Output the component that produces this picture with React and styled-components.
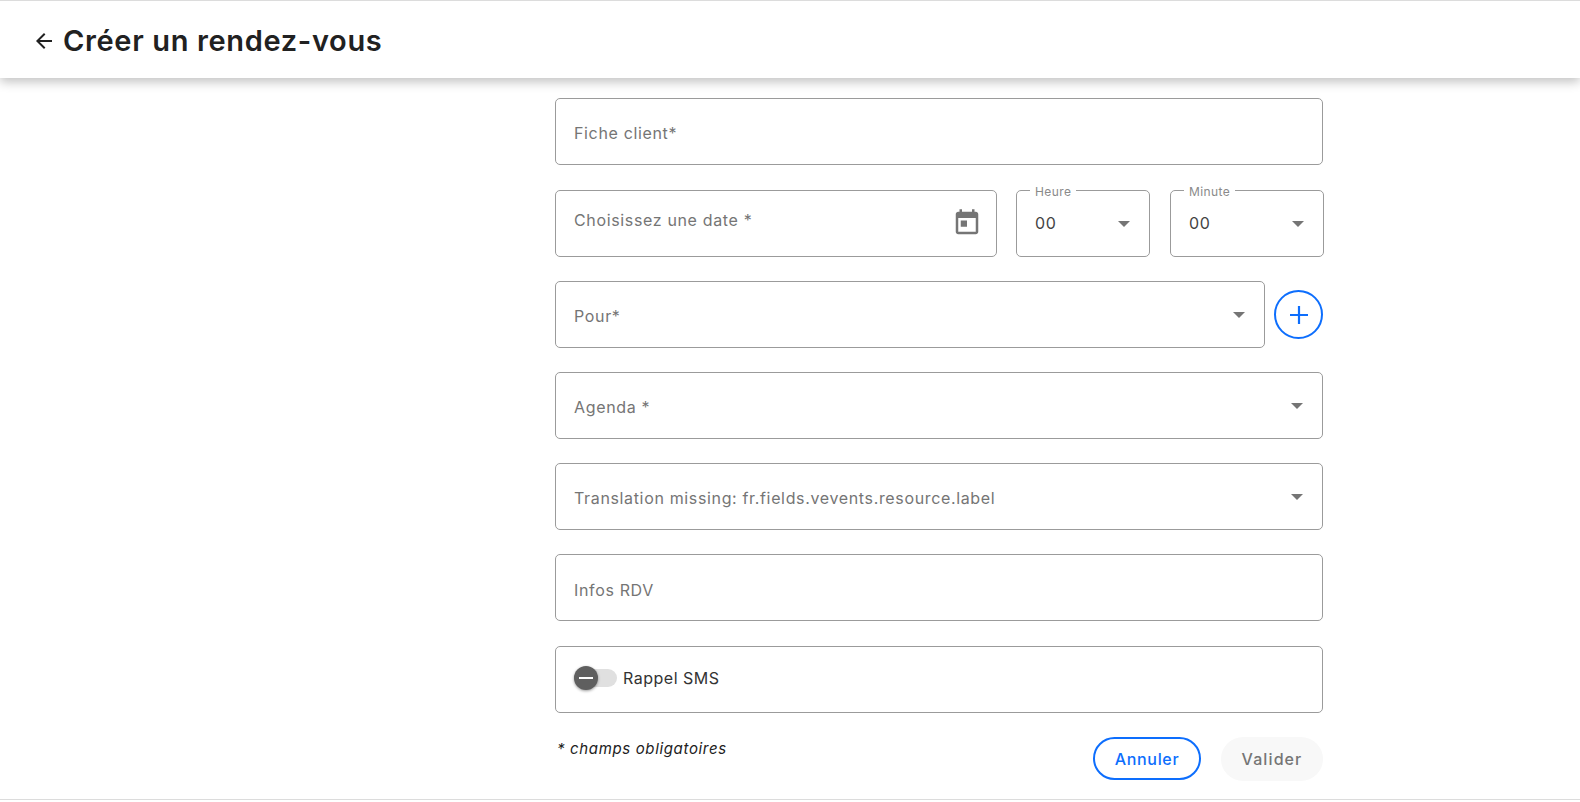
import React from "react";
import styled, { createGlobalStyle } from "styled-components";

const Global = createGlobalStyle`
  html, body { margin: 0; padding: 0; background: #fff; }
  body { font-family: Inter, "Noto Sans", sans-serif; color: #212121; }
  * { box-sizing: border-box; }
`;

const Page = styled.div`
  width: 1580px;
  height: 800px;
  overflow: hidden;
  display: flex;
  flex-direction: column;
  border-top: 1px solid #dcdcdc;
  border-bottom: 1px solid #dcdcdc;
  background: #fff;
`;

const Header = styled.header`
  height: 77px;
  flex: none;
  display: flex;
  align-items: center;
  gap: 7px;
  padding: 0 0 0 32px;
  background: #fff;
  box-shadow: 0 4px 10px rgba(0, 0, 0, 0.24);
`;

const Title = styled.h1`
  margin: 2px 0 0;
  font-size: 29px;
  font-weight: 600;
  letter-spacing: 0.65px;
  color: #212121;
`;

const BackIcon = styled.svg`
  width: 24px;
  height: 24px;
  margin-top: 2px;
  fill: #212121;
`;

const Form = styled.form`
  width: 768px;
  margin: 20px 0 0 555px;
  display: flex;
  flex-direction: column;
  gap: 24.3px;
`;

const Row = styled.div`
  display: flex;
  align-items: center;
  margin-top: ${(p) => p.$nudge || "0"};
`;

const Field = styled.div`
  position: relative;
  flex: ${(p) => p.$flex || "1 1 auto"};
  width: ${(p) => p.$width || "auto"};
  margin-left: ${(p) => p.$left || "0"};
  margin-right: ${(p) => p.$right || "0"};
  height: 67px;
  display: flex;
  align-items: center;
  justify-content: space-between;
  padding: 0 19px 0 18px;
  border: 1px solid #9b9b9b;
  border-radius: 5px;
  background: #fff;
`;

const Placeholder = styled.span`
  font-size: 16px;
  letter-spacing: 0.65px;
  color: #757575;
  position: relative;
  top: ${(p) => p.$shift || "1.7px"};
`;

const Value = styled.span`
  font-size: 16px;
  letter-spacing: 0.6px;
  color: #444;
`;

const Legend = styled.span`
  position: absolute;
  top: -6px;
  left: 13px;
  padding: 0 5px;
  background: #fff;
  font-size: 12px;
  line-height: 14px;
  letter-spacing: 0.4px;
  color: #8a8a8a;
`;

const Caret = styled.i`
  display: block;
  flex: none;
  width: 0;
  height: 0;
  margin-top: 1.5px;
  border-left: 6.5px solid transparent;
  border-right: 6.5px solid transparent;
  border-top: 6.5px solid #757575;
`;

const CalendarIcon = styled.svg`
  width: 30px;
  height: 30px;
  margin-right: -5px;
  fill: #757575;
`;

const PlusButton = styled.button`
  flex: none;
  width: 49px;
  height: 49px;
  margin: 1px 0 0 9px;
  padding: 0;
  display: flex;
  align-items: center;
  justify-content: center;
  background: #fff;
  border: 2px solid #0d6efd;
  border-radius: 50%;
`;

const PlusIcon = styled.svg`
  width: 20px;
  height: 20px;
  stroke: #0d6efd;
  stroke-width: 2.2;
  fill: none;
`;

const Toggle = styled.span`
  position: relative;
  display: block;
  flex: none;
  width: 43px;
  height: 18px;
  border-radius: 9px;
  background: #e0e0e0;
`;

const Thumb = styled.span`
  position: absolute;
  left: 0;
  top: -3px;
  width: 24px;
  height: 24px;
  border-radius: 50%;
  background: #5f5f5f;
  box-shadow: 0 1px 3px rgba(0, 0, 0, 0.4);
  display: flex;
  align-items: center;
  justify-content: center;
  &::after {
    content: "";
    width: 14px;
    height: 2px;
    background: #fff;
  }
`;

const ToggleWrap = styled.div`
  display: flex;
  align-items: center;
  gap: 6px;
  margin-top: -2px;
`;

const ToggleLabel = styled.span`
  font-size: 16px;
  letter-spacing: 0.5px;
  color: #333;
`;

const Footer = styled.div`
  display: flex;
  justify-content: space-between;
  align-items: flex-start;
`;

const Note = styled.em`
  font-size: 15px;
  letter-spacing: 0.65px;
  color: #212121;
  margin: 2px 0 0 2px;
`;

const Actions = styled.div`
  display: flex;
  gap: 20px;
`;

const Outline = styled.button`
  width: 108px;
  height: 43px;
  border: 2px solid #0d6efd;
  border-radius: 22px;
  background: #fff;
  font: 500 16px Inter, sans-serif;
  letter-spacing: 0.7px;
  color: #0d6efd;
`;

const Disabled = styled.button`
  width: 102px;
  height: 44px;
  border: 0;
  border-radius: 22px;
  background: #f8f8f8;
  font: 500 16px Inter, sans-serif;
  letter-spacing: 1.1px;
  color: #757575;
`;

export default function App() {
  return (
    <Page>
      <Global />
      <Header>
        <BackIcon viewBox="0 0 24 24">
          <path d="M20 11H7.83l5.59-5.59L12 4l-8 8 8 8 1.41-1.41L7.83 13H20v-2z" />
        </BackIcon>
        <Title>Créer un rendez-vous</Title>
      </Header>
      <Form>
        <Row>
          <Field><Placeholder>Fiche client*</Placeholder></Field>
        </Row>
        <Row $nudge="0.7px">
          <Field>
            <Placeholder $shift="-3px">Choisissez une date *</Placeholder>
            <CalendarIcon viewBox="0 0 24 24">
              <path d="M19 3h-1V1h-2v2H8V1H6v2H5c-1.11 0-1.99.9-1.99 2L3 19c0 1.1.89 2 2 2h14c1.1 0 2-.9 2-2V5c0-1.1-.9-2-2-2zm0 16H5V8h14v11zM7 10h5v5H7z" />
            </CalendarIcon>
          </Field>
          <Field $flex="none" $width="134px" $left="19px">
            <Legend>Heure</Legend>
            <Value>00</Value>
            <Caret />
          </Field>
          <Field $flex="none" $width="154px" $left="20px" $right="-1px">
            <Legend>Minute</Legend>
            <Value>00</Value>
            <Caret />
          </Field>
        </Row>
        <Row $nudge="-0.7px">
          <Field>
            <Placeholder>Pour*</Placeholder>
            <Caret />
          </Field>
          <PlusButton type="button" aria-label="Ajouter">
            <PlusIcon viewBox="0 0 20 20"><path d="M10 1v18M1 10h18" /></PlusIcon>
          </PlusButton>
        </Row>
        <Row>
          <Field>
            <Placeholder>Agenda *</Placeholder>
            <Caret />
          </Field>
        </Row>
        <Row>
          <Field>
            <Placeholder>Translation missing: fr.fields.vevents.resource.label</Placeholder>
            <Caret />
          </Field>
        </Row>
        <Row>
          <Field><Placeholder>Infos RDV</Placeholder></Field>
        </Row>
        <Row>
          <Field>
            <ToggleWrap>
              <Toggle><Thumb /></Toggle>
              <ToggleLabel>Rappel SMS</ToggleLabel>
            </ToggleWrap>
          </Field>
        </Row>
        <Footer>
          <Note>* champs obligatoires</Note>
          <Actions>
            <Outline type="button">Annuler</Outline>
            <Disabled type="button" disabled>Valider</Disabled>
          </Actions>
        </Footer>
      </Form>
    </Page>
  );
}
